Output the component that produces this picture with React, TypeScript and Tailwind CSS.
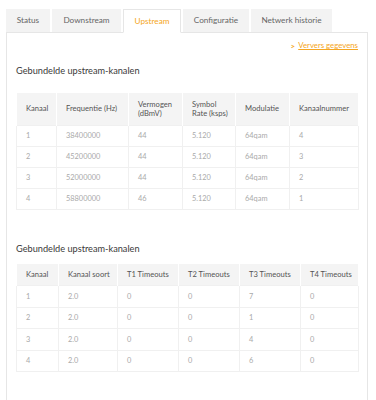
import React from "react";

const font = { fontFamily: "Lato, 'Open Sans', sans-serif" };

const tabs: { t: string; w: string }[] = [
  { t: "Status", w: "w-[44px]" },
  { t: "Downstream", w: "w-[69px]" },
  { t: "Upstream", w: "w-[58px]" },
  { t: "Configuratie", w: "w-[66px]" },
  { t: "Netwerk historie", w: "w-[81px]" },
];

const t1Cols = [40, 72, 54, 53, 54, 69];
const t1Head = ["Kanaal", "Frequentie (Hz)", "Vermogen (dBmV)", "Symbol Rate (ksps)", "Modulatie", "Kanaalnummer"];
const t1Rows = [
  ["1", "38400000", "44", "5.120", "64qam", "4"],
  ["2", "45200000", "44", "5.120", "64qam", "3"],
  ["3", "52000000", "44", "5.120", "64qam", "2"],
  ["4", "58800000", "46", "5.120", "64qam", "1"],
];

const t2Cols = [42, 59, 61, 61, 61, 58];
const t2Head = ["Kanaal", "Kanaal soort", "T1 Timeouts", "T2 Timeouts", "T3 Timeouts", "T4 Timeouts"];
const t2Rows = [
  ["1", "2.0", "0", "0", "7", "0"],
  ["2", "2.0", "0", "0", "1", "0"],
  ["3", "2.0", "0", "0", "4", "0"],
  ["4", "2.0", "0", "0", "6", "0"],
];

function DataTable({
  cols,
  head,
  rows,
  headH,
  rowH,
}: {
  cols: number[];
  head: string[];
  rows: string[][];
  headH: string;
  rowH: string;
}) {
  return (
    <table className="w-[342px] table-fixed border-collapse">
      <colgroup>
        {cols.map((w, i) => (
          <col key={i} style={{ width: w }} />
        ))}
      </colgroup>
      <thead>
        <tr className={headH}>
          {head.map((h, i) => (
            <th
              key={i}
              className="bg-[#f4f4f4] border-x border-white text-left font-normal text-[#555] text-[7.6px] leading-[9px] pl-[9px] pr-[4px] align-middle"
            >
              {h}
            </th>
          ))}
        </tr>
      </thead>
      <tbody>
        {rows.map((r, ri) => (
          <tr key={ri} className={rowH}>
            {r.map((c, ci) => (
              <td
                key={ci}
                className="border border-[#f0f0f0] text-[#aaaaaa] text-[7.4px] leading-[9px] pl-[9px] align-middle"
              >
                {c}
              </td>
            ))}
          </tr>
        ))}
      </tbody>
    </table>
  );
}

export default function App() {
  return (
    <div className="w-[376px] h-[400px] overflow-hidden bg-white" style={font}>
      <div className="pt-[9px] pl-[6px] pr-[8px]">
        <div className="flex gap-[2px] items-end">
          {tabs.map(({ t, w }) => {
            const active = t === "Upstream";
            return (
              <div
                key={t}
                className={
                  active
                    ? `relative z-10 -mb-px h-[24px] ${w} flex items-center justify-center bg-white border border-[#e6e6e6] border-b-white text-[#f5a623] text-[8.2px] whitespace-nowrap`
                    : `h-[23px] ${w} flex items-center justify-center bg-[#f3f3f3] text-[#666] text-[8.2px] whitespace-nowrap`
                }
              >
                {t}
              </div>
            );
          })}
        </div>
        <div className="border border-[#e6e6e6] h-[380px] px-[9px]">
          <div className="pt-[7px] flex justify-end items-center h-[19px] text-[7.8px] text-[#f5a623]">
            <span className="mr-[3px] font-bold text-[8px]">&gt;</span>
            <span className="underline">Ververs gegevens</span>
          </div>
          <div className="mt-[12px] h-[14px] leading-[14px] text-[9.2px] text-[#3a3a3a]">
            Gebundelde upstream-kanalen
          </div>
          <div className="mt-[15px]">
            <DataTable cols={t1Cols} head={t1Head} rows={t1Rows} headH="h-[32px]" rowH="h-[21px]" />
          </div>
          <div className="mt-[32px] h-[14px] leading-[14px] text-[9.2px] text-[#3a3a3a]">
            Gebundelde upstream-kanalen
          </div>
          <div className="mt-[8px]">
            <DataTable cols={t2Cols} head={t2Head} rows={t2Rows} headH="h-[22px]" rowH="h-[21.5px]" />
          </div>
        </div>
      </div>
    </div>
  );
}
